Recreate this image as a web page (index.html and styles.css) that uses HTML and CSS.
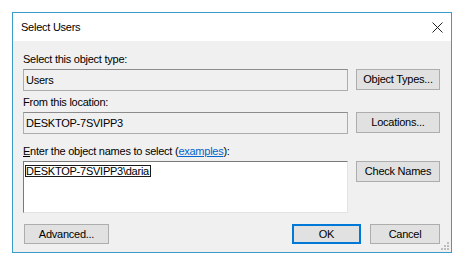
FILE: index.html
```html
<!DOCTYPE html>
<html>
<head>
<meta charset="utf-8">
<link rel="stylesheet" href="styles.css">
</head>
<body>
<div class="window">
  <div class="titlebar">
    <span class="title">Select Users</span>
    <svg class="close" width="11" height="11" viewBox="0 0 11 11"><path d="M0.5 0.5 L10.5 10.5 M10.5 0.5 L0.5 10.5" stroke="#222" stroke-width="1" fill="none"/></svg>
  </div>
  <div class="content">
    <div class="label">Select this object type:</div>
    <div class="row">
      <div class="field">Users</div>
      <div class="btn side">Object Types...</div>
    </div>
    <div class="label gap">From this location:</div>
    <div class="row">
      <div class="field">DESKTOP-7SVIPP3</div>
      <div class="btn side">Locations...</div>
    </div>
    <div class="label gap2"><u>E</u>nter the object names to select (<a class="link">examples</a>):</div>
    <div class="row">
      <div class="textarea"><span class="sel">DESKTOP-7SVIPP3\daria</span></div>
      <div class="btn side">Check Names</div>
    </div>
    <div class="bottom">
      <div class="btn adv">Advanced...</div>
      <div class="spacer"></div>
      <div class="btn ok">OK</div>
      <div class="btn cancel">Cancel</div>
    </div>
  </div>
  <svg class="grip" width="8" height="8" viewBox="0 0 8 8">
    <rect x="6" y="0" width="2" height="2" fill="#bdbdbd"/>
    <rect x="3" y="3" width="2" height="2" fill="#bdbdbd"/>
    <rect x="6" y="3" width="2" height="2" fill="#bdbdbd"/>
    <rect x="0" y="6" width="2" height="2" fill="#bdbdbd"/>
    <rect x="3" y="6" width="2" height="2" fill="#bdbdbd"/>
    <rect x="6" y="6" width="2" height="2" fill="#bdbdbd"/>
  </svg>
</div>
</body>
</html>
```

FILE: styles.css
```css
html, body {
  margin: 0;
  padding: 0;
  background: #ffffff;
}
body {
  font-family: "Liberation Sans", Arial, sans-serif;
  font-size: 11px;
  letter-spacing: -0.25px;
  color: #000;
}
.window {
  position: relative;
  margin: 12px 0 0 12px;
  width: 438px;
  border: 1px solid #3d9bc8;
  background: #f0f0f0;
}
.titlebar {
  height: 28px;
  background: #ffffff;
  display: flex;
  align-items: center;
  padding-left: 8px;
  padding-right: 8px;
  justify-content: space-between;
}
.title {
  font-size: 11px;
  line-height: 13px;
  padding-top: 1px;
}
.close {
  display: block;
  margin-top: 0px;
}
.content {
  padding: 12px 11px 9px 10px;
  height: 190px;
  display: flex;
  flex-direction: column;
}
.label {
  line-height: 13px;
  height: 13px;
  margin-bottom: 3px;
}
.label.gap { margin-top: 5px; }
.label.gap2 { margin-top: 11px; }
.link {
  color: #0066cc;
  text-decoration: underline;
}
.row {
  display: flex;
  align-items: flex-start;
  gap: 8px;
}
.field {
  box-sizing: border-box;
  width: 325px;
  height: 22px;
  border: 1px solid #adadad;
  border-top-color: #8c8c8c;
  background: #f0f0f0;
  line-height: 20px;
  padding-left: 2px;
}
.textarea {
  box-sizing: border-box;
  width: 325px;
  height: 52px;
  background: #ffffff;
  border-top: 1px solid #7a7a7a;
  border-left: 1px solid #7a7a7a;
  border-right: 1px solid #e3e3e3;
  border-bottom: 1px solid #e3e3e3;
  padding: 3px 0 0 1px;
}
.sel {
  display: inline-block;
  border: 1px solid #1a1a1a;
  line-height: 10px;
  padding: 0 1px 0 0;
}
.btn {
  box-sizing: border-box;
  background: #e1e1e1;
  border: 1px solid #adadad;
  text-align: center;
  height: 21px;
  line-height: 19px;
}
.btn.side {
  width: 84px;
}
.bottom {
  margin-top: 11px;
  display: flex;
  align-items: flex-start;
}
.spacer { flex: 1; }
.bottom .btn { height: 20px; line-height: 18px; }
.btn.adv { width: 85px; margin-left: 1px; }
.btn.ok {
  width: 69px;
  border: 1px solid #0078d7;
  box-shadow: inset 0 0 0 1px #0078d7;
  margin-right: 9px;
}
.btn.cancel { width: 70px; }
.grip {
  position: absolute;
  right: 2px;
  bottom: 2px;
}
```
